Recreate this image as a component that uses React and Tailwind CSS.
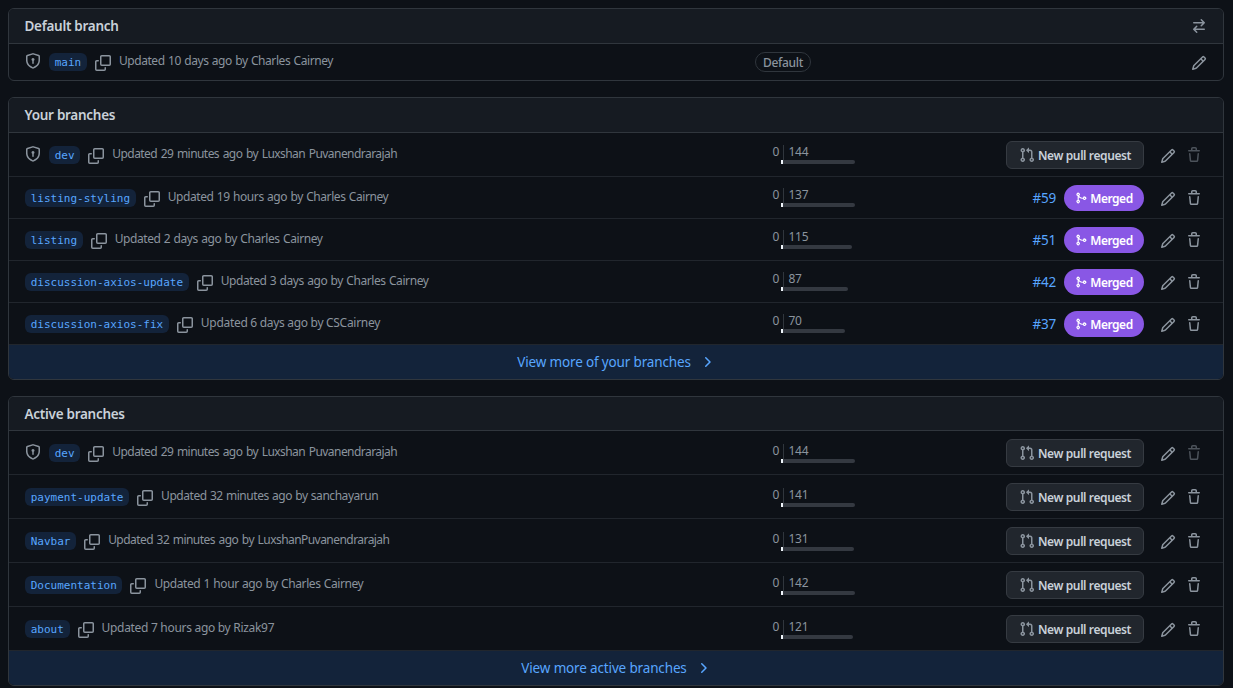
const ICONS = {
  shield: "m8.533.133 5.25 1.68A1.75 1.75 0 0 1 15 3.48V7c0 1.566-.32 3.182-1.303 4.682-.983 1.498-2.585 2.813-5.032 3.855a1.697 1.697 0 0 1-1.33 0c-2.447-1.042-4.049-2.357-5.032-3.855C1.32 10.182 1 8.566 1 7V3.48a1.755 1.755 0 0 1 1.217-1.667l5.25-1.68a1.748 1.748 0 0 1 1.066 0Zm-.61 1.429.001.001-5.25 1.68a.251.251 0 0 0-.174.237V7c0 1.36.275 2.666 1.057 3.859.784 1.194 2.121 2.342 4.366 3.298a.196.196 0 0 0 .154 0c2.245-.957 3.582-2.103 4.366-3.297C13.225 9.666 13.5 8.358 13.5 7V3.48a.25.25 0 0 0-.174-.238l-5.25-1.68a.25.25 0 0 0-.153 0ZM9.5 6.5c0 .536-.286 1.032-.75 1.3v2.45a.75.75 0 0 1-1.5 0V7.8A1.5 1.5 0 1 1 9.5 6.5Z",
  copy: "M0 6.75C0 5.784.784 5 1.75 5h1.5a.75.75 0 0 1 0 1.5h-1.5a.25.25 0 0 0-.25.25v7.5c0 .138.112.25.25.25h7.5a.25.25 0 0 0 .25-.25v-1.5a.75.75 0 0 1 1.5 0v1.5A1.75 1.75 0 0 1 9.25 16h-7.5A1.75 1.75 0 0 1 0 14.25ZM5 1.75C5 .784 5.784 0 6.75 0h7.5C15.216 0 16 .784 16 1.75v7.5A1.75 1.75 0 0 1 14.25 11h-7.5A1.75 1.75 0 0 1 5 9.25Zm1.75-.25a.25.25 0 0 0-.25.25v7.5c0 .138.112.25.25.25h7.5a.25.25 0 0 0 .25-.25v-7.5a.25.25 0 0 0-.25-.25Z",
  pencil: "M11.013 1.427a1.75 1.75 0 0 1 2.474 0l1.086 1.086a1.75 1.75 0 0 1 0 2.474l-8.61 8.61c-.21.21-.47.364-.756.445l-3.251.93a.75.75 0 0 1-.927-.928l.929-3.25c.081-.286.235-.547.445-.758l8.61-8.61Zm.176 4.823L9.75 4.81l-6.286 6.287a.253.253 0 0 0-.064.108l-.558 1.953 1.953-.558a.253.253 0 0 0 .108-.064Zm1.238-3.763a.25.25 0 0 0-.354 0L10.811 3.75l1.439 1.44 1.263-1.263a.25.25 0 0 0 0-.354Z",
  trash: "M11 1.75V3h2.25a.75.75 0 0 1 0 1.5H2.75a.75.75 0 0 1 0-1.5H5V1.75C5 .784 5.784 0 6.75 0h2.5C10.216 0 11 .784 11 1.75ZM4.496 6.675l.66 6.6a.25.25 0 0 0 .249.225h5.19a.25.25 0 0 0 .249-.225l.66-6.6a.75.75 0 0 1 1.492.149l-.66 6.6A1.748 1.748 0 0 1 10.595 15h-5.19a1.75 1.75 0 0 1-1.741-1.575l-.66-6.6a.75.75 0 1 1 1.492-.15ZM6.5 1.75V3h3V1.75a.25.25 0 0 0-.25-.25h-2.5a.25.25 0 0 0-.25.25Z",
  swap: "M5.22 14.78a.75.75 0 0 0 1.06-1.06L4.56 12h8.69a.75.75 0 0 0 0-1.5H4.56l1.72-1.72a.75.75 0 0 0-1.06-1.06l-3 3a.75.75 0 0 0 0 1.06l3 3Zm5.56-6.5a.75.75 0 1 1-1.06-1.06l1.72-1.72H2.75a.75.75 0 0 1 0-1.5h8.69L9.72 2.28a.75.75 0 0 1 1.06-1.06l3 3a.75.75 0 0 1 0 1.06l-3 3Z",
  chevron: "M6.22 3.22a.75.75 0 0 1 1.06 0l4.25 4.25a.75.75 0 0 1 0 1.06l-4.25 4.25a.751.751 0 0 1-1.042-.018.751.751 0 0 1-.018-1.042L9.94 8 6.22 4.28a.75.75 0 0 1 0-1.06Z",
  pull: "M1.5 3.25a2.25 2.25 0 1 1 3 2.122v5.256a2.251 2.251 0 1 1-1.5 0V5.372A2.25 2.25 0 0 1 1.5 3.25Zm5.677-.177L9.573.677A.25.25 0 0 1 10 .854V2.5h1A2.5 2.5 0 0 1 13.5 5v5.628a2.251 2.251 0 1 1-1.5 0V5a1 1 0 0 0-1-1h-1v1.646a.25.25 0 0 1-.427.177L7.177 3.427a.25.25 0 0 1 0-.354ZM3.75 2.5a.75.75 0 1 0 0 1.5.75.75 0 0 0 0-1.5Zm0 9.5a.75.75 0 1 0 0 1.5.75.75 0 0 0 0-1.5Zm8.25.75a.75.75 0 1 0 1.5 0 .75.75 0 0 0-1.5 0Z",
  merge: "M5.45 5.154A4.25 4.25 0 0 0 9.25 7.5h1.378a2.251 2.251 0 1 1 0 1.5H9.25A5.734 5.734 0 0 1 5 7.123v3.505a2.25 2.25 0 1 1-1.5 0V5.372a2.25 2.25 0 1 1 1.95-.218ZM4.25 13.5a.75.75 0 1 0 0-1.5.75.75 0 0 0 0 1.5Zm8.5-4.5a.75.75 0 1 0 0-1.5.75.75 0 0 0 0 1.5ZM5 3.25a.75.75 0 1 0-1.5 0 .75.75 0 0 0 1.5 0Z",
};

function Icon({ name, size = 16, className = "" }) {
  return (
    <svg viewBox="0 0 16 16" width={size} height={size} fill="currentColor" className={`shrink-0 ${className}`}>
      <path d={ICONS[name]} />
    </svg>
  );
}

const TIGHT = "tracking-[-0.55px] [word-spacing:1px]";

const yours = [
  { name: "dev", text: "Updated 29 minutes ago by Luxshan Puvanendrarajah", ahead: 144, bar: 74, locked: true, tracking: TIGHT },
  { name: "listing-styling", text: "Updated 19 hours ago by Charles Cairney", ahead: 137, bar: 74, pr: 59 },
  { name: "listing", text: "Updated 2 days ago by Charles Cairney", ahead: 115, bar: 71, pr: 51 },
  { name: "discussion-axios-update", text: "Updated 3 days ago by Charles Cairney", ahead: 87, bar: 67, pr: 42 },
  { name: "discussion-axios-fix", text: "Updated 6 days ago by CSCairney", ahead: 70, bar: 64, pr: 37, tracking: "tracking-[-0.3px]" },
];

const active = [
  { name: "dev", text: "Updated 29 minutes ago by Luxshan Puvanendrarajah", ahead: 144, bar: 74, locked: true, tracking: TIGHT },
  { name: "payment-update", text: "Updated 32 minutes ago by sanchayarun", ahead: 141, bar: 74, tracking: "tracking-[-0.46px] [word-spacing:0.6px]" },
  { name: "Navbar", text: "Updated 32 minutes ago by LuxshanPuvanendrarajah", ahead: 131, bar: 73, tracking: TIGHT },
  { name: "Documentation", text: "Updated 1 hour ago by Charles Cairney", ahead: 142, bar: 74 },
  { name: "about", text: "Updated 7 hours ago by Rizak97", ahead: 121, bar: 72, tracking: "tracking-[-0.3px]" },
];

function Panel({ title, action, headerClass = "h-[35px]", children }) {
  return (
    <section className="shrink-0 overflow-hidden rounded-md border border-[#30363d]">
      <header className={`flex items-center justify-between border-b border-[#30363d] bg-[#161b22] pr-4 pl-[15.5px] ${headerClass}`}>
        <h2 className="text-[13.5px] leading-5 font-semibold tracking-[-0.28px] text-[#c9d1d9]">{title}</h2>
        {action}
      </header>
      {children}
    </section>
  );
}

function BranchInfo({ name, text, locked, tracking = "tracking-[-0.42px] [word-spacing:0.6px]" }) {
  return (
    <div className="flex w-[740px] shrink-0 items-center">
      {locked && <Icon name="shield" className="mr-2 -mt-0.5" />}
      <span className="flex h-[18px] items-center rounded-md bg-[#13233a] px-[5.7px] pt-0.5 font-['DejaVu_Sans_Mono',monospace] text-[11px] text-[#58a6ff]">
        {name}
      </span>
      <Icon name="copy" className="mt-0.5 ml-2" />
      <span className={`-mt-0.5 ml-2 text-xs leading-[18px] whitespace-nowrap ${tracking}`}>{text}</span>
    </div>
  );
}

function Divergence({ ahead, bar, className }) {
  return (
    <div className={`flex w-[90px] flex-col ${className}`}>
      <div className="flex h-[15px] items-start text-xs leading-[13px] tracking-[-0.3px]">
        <span className="w-[18px] pr-1 text-right">0</span>
        <span className="h-[15px] border-l border-[#30363d] pl-[4.5px]">{ahead}</span>
      </div>
      <div className="ml-4 flex h-1">
        <span className="w-0.5 bg-[#f0f6fc]" />
        <span className="rounded-r-sm bg-[#343941]" style={{ width: bar - 2 }} />
      </div>
    </div>
  );
}

function BranchRow({ row, className, divergenceClass = "mb-px" }) {
  return (
    <div className={`flex items-center border-[#21262d] pt-px pr-[21px] pl-4 ${className}`}>
      <BranchInfo {...row} />
      <Divergence ahead={row.ahead} bar={row.bar} className={divergenceClass} />
      <div className="ml-auto flex items-center">
        {row.pr ? (
          <>
            <a className="mr-2 text-[13.5px] tracking-[-0.2px] text-[#58a6ff]">#{row.pr}</a>
            <span className="flex h-[26px] w-20 items-center justify-center gap-[3px] rounded-full bg-[#8957e5] text-xs font-semibold tracking-[-0.5px] text-white">
              <Icon name="merge" size={12} />
              <span className="pt-px">Merged</span>
            </span>
          </>
        ) : (
          <button className="flex h-7 w-[138px] items-center justify-center gap-[3px] rounded-md border border-[#363b42] bg-[#21262d] text-xs font-semibold tracking-[-0.4px] text-[#c9d1d9]">
            <Icon name="pull" className="text-[#8b949e]" />
            <span className="pt-px">New pull request</span>
          </button>
        )}
        <Icon name="pencil" className="mt-0.5 ml-4" />
        <Icon name="trash" className={`ml-2.5 ${row.locked ? "opacity-50" : ""}`} />
      </div>
    </div>
  );
}

function ViewMore({ children }) {
  return (
    <a className="flex h-[35px] items-center justify-center border-t border-[#21262d] bg-[#13233a] text-[13.5px] tracking-[-0.15px] text-[#58a6ff]">
      <span className="pt-px">{children}</span>
      <Icon name="chevron" className="ml-2" />
    </a>
  );
}

export default function App() {
  return (
    <main className="flex h-[688px] w-[1233px] flex-col gap-4 overflow-hidden bg-[#0d1117] pt-2 pr-[9px] pl-2 font-['Noto_Sans',sans-serif] text-[#8b949e]">
      <Panel title="Default branch" action={<Icon name="swap" />}>
        <div className="flex h-9 items-center px-4">
          <BranchInfo name="main" text="Updated 10 days ago by Charles Cairney" locked />
          <span className="ml-[-10px] flex h-5 w-14 items-center justify-center rounded-full border border-[#30363d] pt-px text-xs font-medium tracking-[-0.3px]">
            Default
          </span>
          <Icon name="pencil" className="mt-0.5 ml-auto" />
        </div>
      </Panel>
      <Panel title="Your branches">
        {yours.map((row, i) => (
          <BranchRow
            key={row.name}
            row={row}
            className={i === 0 ? "h-11 border-b" : i === yours.length - 1 ? "h-[41px]" : "h-[42px] border-b"}
          />
        ))}
        <ViewMore>View more of your branches</ViewMore>
      </Panel>
      <Panel title="Active branches" headerClass="h-[34px]">
        {active.map((row, i) => (
          <BranchRow
            key={row.name}
            row={row}
            className={i === active.length - 1 ? "h-[43px]" : "h-11 border-b"}
            divergenceClass="-mb-px"
          />
        ))}
        <ViewMore>View more active branches</ViewMore>
      </Panel>
    </main>
  );
}
